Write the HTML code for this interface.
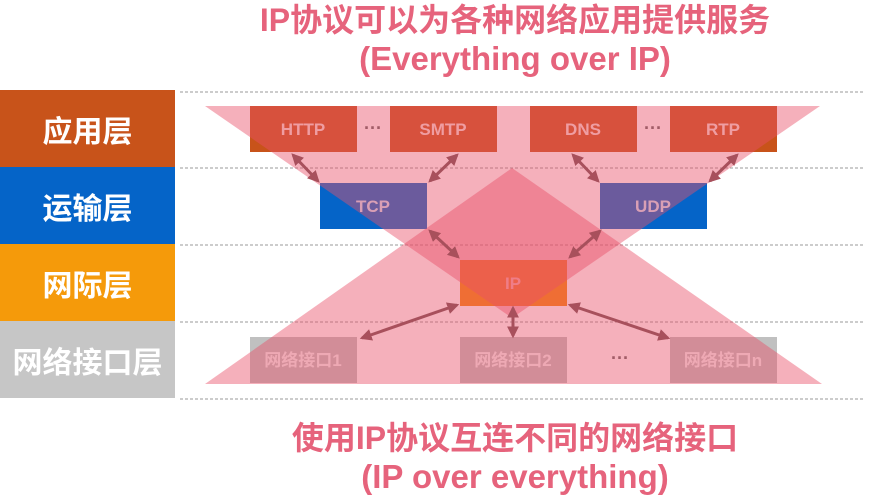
<!DOCTYPE html>
<html><head><meta charset="utf-8"><style>
body{margin:0;width:883px;height:504px;background:#fff;overflow:hidden;position:relative;font-family:"Liberation Sans","Noto Sans CJK SC",sans-serif}
.t{position:absolute;left:0;width:1030px;text-align:center;color:#e6637c;font-weight:bold;font-size:32px;line-height:37px}
.l{position:absolute;left:0;width:175px;height:77px;color:#fff;font-weight:bold;font-size:30px;display:flex;align-items:center;justify-content:center}
</style></head><body>
<div class="t" style="top:2px">IP协议可以为各种网络应用提供服务</div>
<div class="t" style="top:40px;font-size:33px">(Everything over IP)</div>
<div class="l" style="top:90px;background:#c8531a">应用层</div>
<div class="l" style="top:167px;background:#0564c8">运输层</div>
<div class="l" style="top:244px;background:#f59a0a">网际层</div>
<div class="l" style="top:321px;background:#c6c6c6">网络接口层</div>
<svg width="883" height="504" style="position:absolute;left:0;top:0" font-family="Liberation Sans, Noto Sans CJK SC, sans-serif">
<defs><marker id="a" viewBox="0 0 10 10" refX="8" refY="5" markerWidth="4" markerHeight="4" orient="auto-start-reverse"><path d="M0,0L10,5L0,10z" fill="#a8505c"/></marker></defs>
<g stroke="#999" stroke-dasharray="3,2" stroke-width="1">
<line x1="180" y1="92" x2="865" y2="92"/><line x1="180" y1="168" x2="865" y2="168"/><line x1="180" y1="245" x2="865" y2="245"/><line x1="180" y1="322" x2="865" y2="322"/><line x1="180" y1="399" x2="865" y2="399"/>
</g>
<g fill="#c8531a"><rect x="250" y="106" width="107" height="46"/><rect x="390" y="106" width="107" height="46"/><rect x="530" y="106" width="107" height="46"/><rect x="670" y="106" width="107" height="46"/></g>
<g fill="#0564c8"><rect x="320" y="183" width="107" height="46"/><rect x="600" y="183" width="107" height="46"/></g>
<rect x="460" y="260" width="107" height="46" fill="#f5880a"/>
<g fill="#c0c0c0"><rect x="250" y="337" width="107" height="46"/><rect x="460" y="337" width="107" height="46"/><rect x="670" y="337" width="107" height="46"/></g>
<g fill="#fff" font-size="17" font-weight="bold" text-anchor="middle" opacity="0.8">
<text x="303" y="135">HTTP</text><text x="443" y="135">SMTP</text><text x="583" y="135">DNS</text><text x="723" y="135">RTP</text>
<text x="373" y="212">TCP</text><text x="653" y="212">UDP</text><text x="513" y="289">IP</text>
<text x="303" y="366">网络接口1</text><text x="513" y="366">网络接口2</text><text x="723" y="366">网络接口n</text>
</g>
<g fill="#666" font-size="18" font-weight="bold" text-anchor="middle"><text x="373" y="134">···</text><text x="653" y="134">···</text><text x="620" y="364">···</text></g>
<polygon points="205,106 820,106 512,318" fill="#e85069" opacity="0.45"/>
<polygon points="512,168 822,384 205,384" fill="#e85069" opacity="0.45"/>
<g stroke="#a8505c" stroke-width="3" marker-start="url(#a)" marker-end="url(#a)">
<line x1="293" y1="155" x2="318" y2="181"/><line x1="457" y1="155" x2="430" y2="181"/>
<line x1="573" y1="155" x2="598" y2="181"/><line x1="737" y1="155" x2="710" y2="181"/>
<line x1="430" y1="231" x2="458" y2="257"/><line x1="600" y1="231" x2="570" y2="257"/>
<line x1="457" y1="305" x2="362" y2="338"/><line x1="513" y1="308" x2="513" y2="336"/><line x1="570" y1="305" x2="668" y2="338"/>
</g>
</svg>
<div class="t" style="top:420px">使用IP协议互连不同的网络接口</div>
<div class="t" style="top:458px;font-size:33px">(IP over everything)</div>
</body></html>
